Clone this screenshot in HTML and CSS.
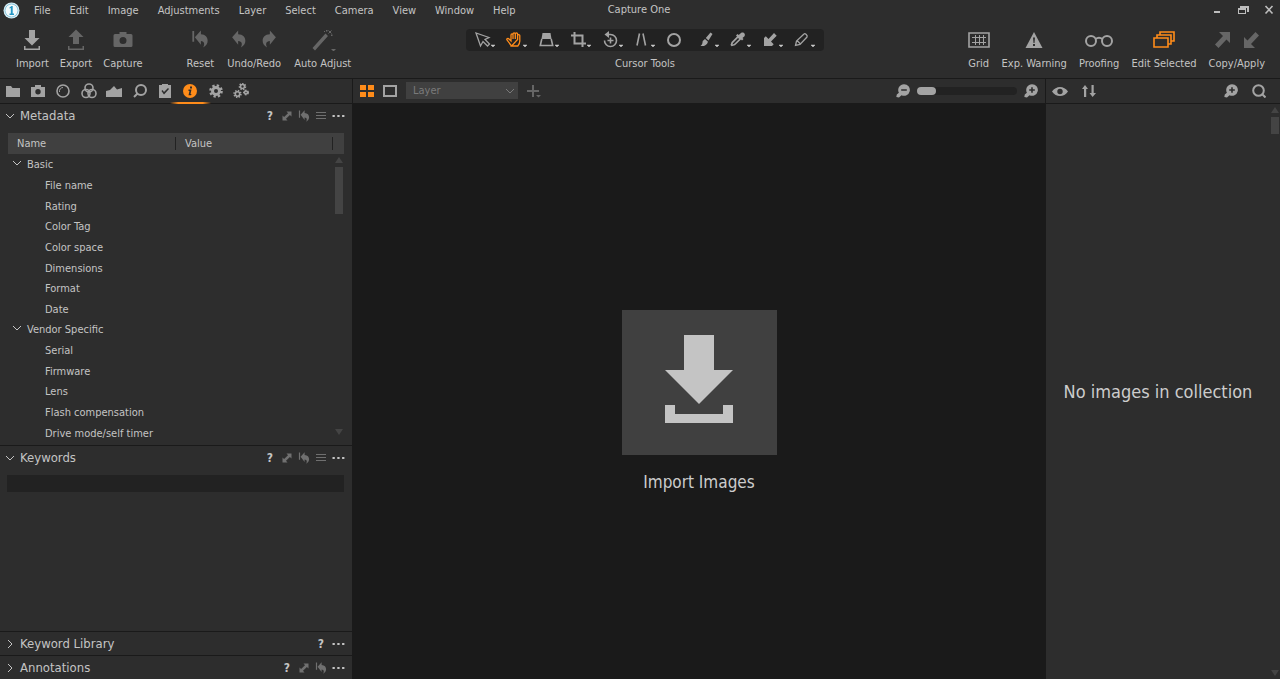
FILE: index.html
```html
<!DOCTYPE html>
<html lang="en">
<head>
<meta charset="utf-8">
<title>Capture One</title>
<link rel="stylesheet" href="styles.css">
</head>
<body>
<svg class="defs" aria-hidden="true">
  <symbol id="i-down" viewBox="0 0 20 22"><path d="M7 1h6v8h4.500L10 16.500 2.500 9H7zM2 17h1.500v2.500h13V17H18v4H2z"/></symbol>
  <symbol id="i-up" viewBox="0 0 20 22"><path d="M7 15V8H2.500L10 0.500 17.500 8H13v7zM2 17h1.500v2.500h13V17H18v4H2z"/></symbol>
  <symbol id="i-camera" viewBox="0 0 20 20"><path fill-rule="evenodd" d="M6.500 2h7v2H18a1.500 1.500 0 0 1 1.500 1.500v10A1.500 1.500 0 0 1 18 17H2A1.500 1.500 0 0 1 .5 15.500v-10A1.500 1.500 0 0 1 2 4h4.500zM10 7a3.500 3.500 0 1 0 0 7 3.500 3.500 0 0 0 0-7z"/></symbol>
  <symbol id="i-undo" viewBox="0 0 18 20"><path d="M7.500.5v4.300c5.500.2 8 3.300 8 7.200 0 3-1.500 5.500-5 7.500 2-3.500 1.500-7-3-7.200v4.200L.8 8z"/></symbol>
  <symbol id="i-reset" viewBox="0 0 20 20"><path d="M1.500 1h2v12h-2zM11 .5v4.300c5 .2 7.500 3.300 7.500 7.200 0 3-1.500 5.500-5 7.500 2-3.500 1.500-7-2.500-7.200v4.200L4.300 8z"/></symbol>
  <symbol id="i-more" viewBox="0 0 13 4"><path d="M.5 1h2.300v2H.5zM5.300 1h2.300v2H5.300zM10.100 1h2.300v2h-2.300z"/></symbol>
  <symbol id="i-list" viewBox="0 0 12 10"><path d="M1 1h10v1H1zM1 4h10v1H1zM1 7h10v1H1z"/></symbol>
  <symbol id="i-expand" viewBox="0 0 12 12"><path d="M5.500 1.500h5v5L8.900 4.900 5 8.800l1.500 1.700h-5v-5l1.600 1.600L7 3.200z"/></symbol>
  <symbol id="i-open" viewBox="0 0 10 10"><path class="line" d="M1 3l4 4 4-4"/></symbol>
  <symbol id="i-closed" viewBox="0 0 10 10"><path class="line" d="M3 1l4 4-4 4"/></symbol>
  <symbol id="i-plus" viewBox="0 0 14 14"><path fill-rule="evenodd" d="M8 .2a5.800 5.800 0 1 1-2.500 11L3 13.500 .3 13 .8 10.500 2.900 8.800A5.800 5.800 0 0 1 8 .2zM7.200 3.200v2H5.200v1.600h2v2h1.600v-2h2V5.200h-2v-2z"/></symbol>
  <symbol id="i-minus" viewBox="0 0 14 14"><path fill-rule="evenodd" d="M8 .2a5.800 5.800 0 1 1-2.500 11L3 13.500 .3 13 .8 10.500 2.900 8.800A5.800 5.800 0 0 1 8 .2zM5.200 5.200v1.600h5.600V5.200z"/></symbol>
</svg>

<header class="top">
  <div class="menubar">
    <nav class="menus" aria-label="Main menu">
      <svg class="logo" viewBox="0 0 17 17"><circle cx="8.500" cy="8.500" r="8" fill="#d9eff7"/><circle cx="8.500" cy="8.500" r="6.500" fill="#f2fafc" stroke="#8ac6dc"/><path d="M6.500 5.500l2-1.500h1.200v7.500H11V13H6.500v-1.500h1.300V6l-1.300.5z" fill="#2396c4"/></svg>
      <button>File</button><button>Edit</button><button>Image</button><button>Adjustments</button><button>Layer</button><button>Select</button><button>Camera</button><button>View</button><button>Window</button><button>Help</button>
    </nav>
    <h1 class="title">Capture One</h1>
    <div class="window-controls">
      <button aria-label="Minimize"><svg viewBox="0 0 12 12"><path d="M3 7h6v2H3z"/></svg></button>
      <button aria-label="Restore"><svg viewBox="0 0 12 12"><path fill-rule="evenodd" d="M3 2h9v6h-2V4H3zM1 4h8v6H1zM2 6v3h6V6z"/></svg></button>
      <button aria-label="Close"><svg viewBox="0 0 12 12"><path class="line thick" d="M2.500 2l7 7.500M9.500 2l-7 7.500"/></svg></button>
    </div>
  </div>

  <div class="toolbar">
    <div class="start">
      <div class="group">
        <button class="tool lit"><svg class="ic20" viewBox="0 0 20 22"><use href="#i-down"/></svg><span>Import</span></button>
        <button class="tool"><svg class="ic20" viewBox="0 0 20 22"><use href="#i-up"/></svg><span>Export</span></button>
        <button class="tool"><svg class="ic20" viewBox="0 0 20 20"><use href="#i-camera"/></svg><span>Capture</span></button>
      </div>
      <div class="group loose">
        <button class="tool"><svg class="ic20" viewBox="0 0 20 22"><use href="#i-reset" x="1" y="1" width="18" height="18"/></svg><span>Reset</span></button>
        <button class="tool"><span class="pair"><svg class="ic20" viewBox="0 0 20 22"><use href="#i-undo" x="2" y="1" width="17" height="18"/></svg><svg class="ic20 flip" viewBox="0 0 20 22"><use href="#i-undo" x="2" y="1" width="17" height="18"/></svg></span><span>Undo/Redo</span></button>
        <button class="tool"><svg class="wand" viewBox="0 0 26 22"><path fill-rule="evenodd" d="M15.500 4.500l2.500 2.500L5 21.500 2.500 19zM14 9.500l-7 8M16 1h1.500v1.500H16zM21 5.500h1.500V7H21zM14 2h1v1h-1z"/><path class="line" d="M18.500 1.500l3 3M21.500 1.500l-3 3"/><path d="M21 20h5l-2.500 2.500z"/></svg><span>Auto Adjust</span></button>
      </div>
    </div>

    <div class="cursor-group">
      <div class="cursor-tools" role="group" aria-labelledby="cursor-label">
        <button aria-label="Select"><svg viewBox="0 0 24 20"><path class="line mid" d="M4 3l4.500 13 2.500-4.500 4.500 4.500 2-2-4.500-4.500 4-2z"/><path class="caret" d="M19 15h4l-2 2z"/></svg></button>
        <button aria-label="Pan" class="on"><svg viewBox="0 0 24 20"><path class="line mid" d="M7.500 16L3 10c-.7-1.300 1-2.300 2-1L7 11V5c0-1.400 2-1.400 2 0v4M9 9V4c0-1.400 2.300-1.400 2.300 0v5M11.300 9V4c0-1.400 2.300-1.400 2.300 0v5.500M13.600 9.500V5.500c0-1.300 2.200-1.300 2.200 0V11c0 2-.7 3.500-2 5H7.500z"/><path class="caret" d="M19 15h4l-2 2z"/></svg></button>
        <button aria-label="Keystone"><svg viewBox="0 0 24 20"><path d="M6.500 3h8l1 6h-10z"/><path class="line thick" d="M5.800 9L4.300 15.500h12.400L15.200 9"/><path class="caret" d="M19 15h4l-2 2z"/></svg></button>
        <button aria-label="Crop"><svg viewBox="0 0 24 20"><path class="line bold" d="M6.500 2v11.500H18M3 5.500h11.500V17"/><path class="caret" d="M19 15h4l-2 2z"/></svg></button>
        <button aria-label="Rotate"><svg viewBox="0 0 24 20"><path class="line thick" d="M8.500 4.500h2a6 6 0 1 1-6 6M10.500 7.500v6M7.500 10.500h6"/><path d="M9 1v7L4.500 4.500z"/><path class="caret" d="M19 15h4l-2 2z"/></svg></button>
        <button aria-label="Straighten"><svg viewBox="0 0 24 20"><path class="line thick" d="M7.500 3.500l-2.500 12M11 3.500l2.500 12"/><path class="caret" d="M19 15h4l-2 2z"/></svg></button>
        <button aria-label="Spot"><svg viewBox="0 0 24 20"><circle class="line bold" cx="10" cy="10" r="6"/></svg></button>
        <button aria-label="Brush"><svg viewBox="0 0 24 20"><path d="M14.500 2.500l2 1.500-4 6.500-2.700-2.500zM9 9l3 2.700c-1 3.600-4 4.800-7.500 4.300 1.700-1 2-3 2.200-5z"/><path class="caret" d="M19 15h4l-2 2z"/></svg></button>
        <button aria-label="Color picker"><svg viewBox="0 0 24 20"><path fill-rule="evenodd" d="M13 3c2-1.500 5 .5 3.500 3.200L14.500 8l1 1-1.500 1.500-1-1L7 15.200l-3.500 1L2.500 15l1-3L9 6.500l-1-1L9.500 4l1.200 1zM10 8l-5 5-.5 1.500 1.500-.5 5.200-5z"/><path class="caret" d="M19 15h4l-2 2z"/></svg></button>
        <button aria-label="Apply"><svg viewBox="0 0 24 20"><path d="M14 3l2.700 2.700-5.700 5.800 2.700 2.700L12 16H4V8l1.800-1.700L8.500 9z"/><path class="caret" d="M19 15h4l-2 2z"/></svg></button>
        <button aria-label="Eraser"><svg viewBox="0 0 24 20"><path class="line mid" d="M12 4c1-1 4 1.500 3 3l-7 7.500-4.500 1 1-4.500zM5 10.500L8.500 14"/><path class="caret" d="M19 15h4l-2 2z"/></svg></button>
      </div>
      <span id="cursor-label">Cursor Tools</span>
    </div>

    <div class="group end">
      <button class="tool lit"><svg class="ic22" viewBox="0 0 22 20"><path class="line thick" d="M1 3h20v14H1z"/><path class="line" d="M4 7.500h14M4 12.500h14M7.500 5v10M11.500 5v10M15.500 5v10"/></svg><span>Grid</span></button>
      <button class="tool lit"><svg class="ic22" viewBox="0 0 22 20"><path fill-rule="evenodd" d="M11 2l8.500 16h-17zM10 7.500h2l-.5 5.500h-1zM10 14h2v2h-2z"/></svg><span>Exp. Warning</span></button>
      <button class="tool lit"><svg class="ic28" viewBox="0 0 28 20"><circle class="line bold" cx="6" cy="11" r="5"/><circle class="line bold" cx="22" cy="11" r="5"/><path class="line bold" d="M10.500 9c2-1.500 5-1.500 7 0"/></svg><span>Proofing</span></button>
      <button class="tool on"><svg class="ic22" viewBox="0 0 22 20"><path class="line thick" d="M1 8h14v9H1zM4 8V5h14v9h-3M7 5V2h14v9h-3"/></svg><span>Edit Selected</span></button>
      <button class="tool"><span class="pair"><svg class="ic20" viewBox="0 0 20 20"><path d="M7 2h11v11l-3.500-3.500-8 8.500L3 14.500 11 6z"/></svg><svg class="ic20" viewBox="0 0 20 20"><path d="M13 18H2V7l3.500 3.500 8-8.500L17 5.500 9 14z"/></svg></span><span>Copy/Apply</span></button>
    </div>
  </div>
</header>

<main class="work">
  <aside class="left">
    <div class="bar tabs" role="tablist">
      <button role="tab" aria-label="Library"><svg viewBox="0 0 16 16"><path d="M1 3h5l1.500 2H15v9H1z"/></svg></button>
      <button role="tab" aria-label="Capture"><svg viewBox="0 0 16 16"><path fill-rule="evenodd" d="M5 2h6v2h4v10H1V4h4zM8 6a2.700 2.700 0 1 0 0 5.400A2.700 2.700 0 0 0 8 6z"/></svg></button>
      <button role="tab" aria-label="Lens"><svg viewBox="0 0 16 16"><circle class="line thick" cx="8" cy="8" r="6"/><path class="line" d="M4.500 9a3.700 3.700 0 0 1 3.500-4.500"/></svg></button>
      <button role="tab" aria-label="Color"><svg viewBox="0 0 16 16"><circle class="line thick" cx="8" cy="5" r="4"/><circle class="line thick" cx="5" cy="10.500" r="4"/><circle class="line thick" cx="11" cy="10.500" r="4"/></svg></button>
      <button role="tab" aria-label="Exposure"><svg viewBox="0 0 16 16"><path d="M0 14V8l4-1 4-4 3 3.500L16 5v9z"/></svg></button>
      <button role="tab" aria-label="Details"><svg viewBox="0 0 16 16"><circle class="line bold" cx="9" cy="7" r="5"/><path class="line bold" d="M5.500 10.500L2 14"/></svg></button>
      <button role="tab" aria-label="Adjustments"><svg viewBox="0 0 16 16"><path fill-rule="evenodd" d="M2 2h3V1h6v1h3v13H2zM4.500 8L7 11.500l5-5.500-1-1-4 4L5.500 7z"/></svg></button>
      <button role="tab" aria-label="Metadata" aria-selected="true" class="on"><svg viewBox="0 0 16 16"><path fill-rule="evenodd" d="M8 1a7 7 0 1 1 0 14A7 7 0 0 1 8 1zM8 3.500h2v2H8zM6.500 6.500h3L8.500 11h1l-.5 1.200H6.500L7.500 8h-1z"/></svg></button>
      <button role="tab" aria-label="Output"><svg viewBox="0 0 16 16"><circle class="line gear" cx="8" cy="8" r="5.300"/><circle class="line wide" cx="8" cy="8" r="3.500"/></svg></button>
      <button role="tab" aria-label="Batch"><svg viewBox="0 0 16 16"><circle class="line cog" cx="9.500" cy="3.500" r="2.800"/><circle class="line thick" cx="9.500" cy="3.500" r="2"/><circle class="line cog" cx="4.500" cy="11" r="3.200"/><circle class="line thick" cx="4.500" cy="11" r="2.200"/><circle class="line cog" cx="13" cy="9.500" r="2"/><circle class="line thick" cx="13" cy="9.500" r="1.500"/></svg></button>
    </div>

    <section class="panel">
      <div class="panel-head">
        <button class="fold"><svg viewBox="0 0 10 10"><use href="#i-open"/></svg><span>Metadata</span></button>
        <div class="panel-actions"><button aria-label="Help" class="help">?</button><button aria-label="Copy"><svg viewBox="0 0 12 12"><use href="#i-expand"/></svg></button><button aria-label="Reset"><svg viewBox="0 0 12 12"><use href="#i-reset" /></svg></button><button aria-label="Presets"><svg viewBox="0 0 12 10"><use href="#i-list"/></svg></button><button aria-label="More" class="more"><svg viewBox="0 0 13 4"><use href="#i-more"/></svg></button></div>
      </div>
      <div class="meta">
        <table>
          <thead><tr><th class="name">Name</th><th class="value">Value</th></tr></thead>
          <tbody>
            <tr class="cat"><td colspan="2"><svg viewBox="0 0 10 10"><use href="#i-open"/></svg>Basic</td></tr>
            <tr><td>File name</td><td></td></tr>
            <tr><td>Rating</td><td></td></tr>
            <tr><td>Color Tag</td><td></td></tr>
            <tr><td>Color space</td><td></td></tr>
            <tr><td>Dimensions</td><td></td></tr>
            <tr><td>Format</td><td></td></tr>
            <tr><td>Date</td><td></td></tr>
            <tr class="cat"><td colspan="2"><svg viewBox="0 0 10 10"><use href="#i-open"/></svg>Vendor Specific</td></tr>
            <tr><td>Serial</td><td></td></tr>
            <tr><td>Firmware</td><td></td></tr>
            <tr><td>Lens</td><td></td></tr>
            <tr><td>Flash compensation</td><td></td></tr>
            <tr><td>Drive mode/self timer</td><td></td></tr>
          </tbody>
        </table>
        <div class="scroll"><i class="up"></i><i class="thumb"></i><i class="down"></i></div>
      </div>
    </section>

    <section class="panel grow">
      <div class="panel-head">
        <button class="fold"><svg viewBox="0 0 10 10"><use href="#i-open"/></svg><span>Keywords</span></button>
        <div class="panel-actions"><button aria-label="Help" class="help">?</button><button aria-label="Copy"><svg viewBox="0 0 12 12"><use href="#i-expand"/></svg></button><button aria-label="Reset"><svg viewBox="0 0 12 12"><use href="#i-reset"/></svg></button><button aria-label="Presets"><svg viewBox="0 0 12 10"><use href="#i-list"/></svg></button><button aria-label="More" class="more"><svg viewBox="0 0 13 4"><use href="#i-more"/></svg></button></div>
      </div>
      <input class="keywords" type="text" aria-label="Keywords">
    </section>

    <section class="panel">
      <div class="panel-head">
        <button class="fold"><svg viewBox="0 0 10 10"><use href="#i-closed"/></svg><span>Keyword Library</span></button>
        <div class="panel-actions"><button aria-label="Help" class="help">?</button><button aria-label="More" class="more"><svg viewBox="0 0 13 4"><use href="#i-more"/></svg></button></div>
      </div>
    </section>
    <section class="panel">
      <div class="panel-head">
        <button class="fold"><svg viewBox="0 0 10 10"><use href="#i-closed"/></svg><span>Annotations</span></button>
        <div class="panel-actions"><button aria-label="Help" class="help">?</button><button aria-label="Copy"><svg viewBox="0 0 12 12"><use href="#i-expand"/></svg></button><button aria-label="Reset"><svg viewBox="0 0 12 12"><use href="#i-reset"/></svg></button><button aria-label="More" class="more"><svg viewBox="0 0 13 4"><use href="#i-more"/></svg></button></div>
      </div>
    </section>
  </aside>

  <section class="viewer">
    <div class="bar viewer-bar">
      <button aria-label="Grid view" class="on"><svg viewBox="0 0 14 14"><path d="M0 1h6v5H0zM8 1h6v5H8zM0 8h6v5H0zM8 8h6v5H8z"/></svg></button>
      <button aria-label="Single view"><svg viewBox="0 0 14 14"><path class="line bold" d="M1 2h12v10H1z"/></svg></button>
      <div class="layer"><select aria-label="Layer"><option>Layer</option></select><svg viewBox="0 0 10 10"><use href="#i-open"/></svg></div>
      <button aria-label="Add layer" class="dim"><svg viewBox="0 0 14 14"><path d="M5 1h2v5h5v2H7v5H5V8H0V6h5zM9 11h5l-2.500 2.500z"/></svg></button>
      <div class="zoom">
        <button aria-label="Zoom out"><svg viewBox="0 0 14 14"><use href="#i-minus"/></svg></button>
        <input type="range" min="0" max="100" value="0" aria-label="Thumbnail size">
        <button aria-label="Zoom in"><svg viewBox="0 0 14 14"><use href="#i-plus"/></svg></button>
      </div>
    </div>
    <div class="stage">
      <button class="import">
        <span class="import-box"><svg viewBox="0 0 68 88"><path d="M19 0h30v35h19L34 69 0 35h19zM0 70h10v9h48v-9h10v18H0z"/></svg></span>
        <span>Import Images</span>
      </button>
    </div>
  </section>

  <aside class="browser">
    <div class="bar browser-bar">
      <button aria-label="Visibility"><svg class="ic16" viewBox="0 0 16 14"><path fill-rule="evenodd" d="M0 7.500c4-6 12-6 16 0-4 6-12 6-16 0zM8 4.800a2.700 2.700 0 1 0 0 5.400 2.700 2.700 0 0 0 0-5.400z"/></svg></button>
      <button aria-label="Sort"><svg viewBox="0 0 14 14"><path d="M3 1l3 4H4.200v8H2V5H0zM9.500 1h2.200v8H14l-3.400 4L7.500 9h2z"/></svg></button>
      <button aria-label="Zoom in" class="push"><svg viewBox="0 0 14 14"><use href="#i-plus"/></svg></button>
      <button aria-label="Search"><svg viewBox="0 0 14 14"><circle class="line bold" cx="6.500" cy="6.500" r="5.300"/><path class="line bold" d="M10 10l3.500 3.500"/></svg></button>
    </div>
    <div class="browser-body">
      <p>No images in collection</p>
      <div class="scroll"><i class="up"></i><i class="thumb short"></i><i class="down"></i></div>
    </div>
  </aside>
</main>
</body>
</html>
```
FILE: styles.css
```css
:root {
  --bg: #2d2d2d;
  --edge: #1a1a1a;
  --raised: #404040;
  --well: #222222;
  --text: #c4c4c4;
  --icon: #a3a3a3;
  --dim: #666666;
  --accent: #ff8c1a;
}

* { box-sizing: border-box; }

body {
  margin: 0;
  height: 100vh;
  display: flex;
  flex-direction: column;
  background: var(--bg);
  color: var(--text);
  font: 11px/16px "DejaVu Sans Condensed", "Noto Sans", sans-serif;
  overflow: hidden;
}

button, input, select { font: inherit; color: inherit; }
button { padding: 0; border: 0; background: none; white-space: nowrap; }
svg { display: block; fill: currentColor; flex: none; }
.defs { position: absolute; width: 0; height: 0; }
.line { fill: none; stroke: currentColor; stroke-width: 1; }
.mid { stroke-width: 1.300; }
.thick { stroke-width: 1.600; }
.bold { stroke-width: 2; }
.wide { stroke-width: 3; }
.gear { stroke-width: 3; stroke-dasharray: 2.200 1.963; }
.cog { stroke-width: 2; stroke-dasharray: 1.300 1.200; }

/* Title and menu row */
.menubar {
  display: grid;
  grid-template-columns: 1fr auto 1fr;
  align-items: center;
  height: 20px;
  padding: 0 5px 0 3px;
}
.menus { display: flex; align-items: center; gap: 19px; }
.menus button { padding-top: 1px; }
.logo { width: 17px; height: 17px; margin-right: -5px; }
.title { margin: 0; font-size: 11px; font-weight: 400; }
.window-controls { display: flex; justify-content: flex-end; gap: 14px; color: #bdbdbd; }
.window-controls svg { width: 12px; height: 12px; }

/* Main toolbar */
.toolbar {
  display: grid;
  grid-template-columns: 1fr auto 1fr;
  height: 59px;
  padding: 9px 5px 0 15px;
  border-bottom: 1px solid var(--edge);
}
.start { display: flex; gap: 44px; padding-left: 1px; }
.group { display: flex; align-items: flex-start; gap: 11px; }
.loose { gap: 13px; }
.end { justify-content: flex-end; gap: 12px; margin-right: 10px; }
.tool { display: flex; flex-direction: column; align-items: center; gap: 5px; }
.tool svg { color: var(--dim); height: 22px; }
.tool.lit svg { color: var(--icon); }
.tool.on svg { color: var(--accent); }
.pair { display: flex; gap: 10px; }
.flip { transform: scaleX(-1); }
.ic20 { width: 20px; }
.ic22 { width: 22px; }
.ic28 { width: 28px; }
.wand { width: 26px; }
.cursor-group { display: flex; flex-direction: column; align-items: center; gap: 5px; }
.cursor-tools {
  display: grid;
  grid-template-columns: repeat(11, 32px);
  padding: 0 2px 0 4px;
  height: 22px;
  border-radius: 4px;
  background: var(--well);
  color: var(--icon);
}
.cursor-tools button { display: flex; align-items: center; padding-left: 2px; }
.cursor-tools svg { width: 24px; height: 20px; }
.cursor-tools .on { color: var(--accent); }
.caret { fill: #c8c8c8; stroke: #c8c8c8; stroke-width: 0.500; }

/* Work area */
.work {
  flex: 1;
  min-height: 0;
  display: grid;
  grid-template-columns: 352px 1fr 234px;
  gap: 1px;
  background: var(--edge);
}
.left, .viewer, .browser { display: flex; flex-direction: column; min-width: 0; min-height: 0; }
.left, .browser { background: var(--bg); }
.bar {
  display: flex;
  align-items: center;
  height: 25px;
  padding-bottom: 1px;
  border-bottom: 1px solid var(--edge);
  background: var(--bg);
  color: var(--icon);
  flex: none;
}
.bar .on { color: var(--accent); }
.bar svg { width: 14px; height: 14px; }

.tabs { display: grid; grid-template-columns: repeat(10, 1fr); padding-right: 98px; }
.tabs button { display: flex; justify-content: center; align-items: center; height: 24px; }
.tabs svg { width: 16px; height: 16px; }
.tabs .on { position: relative; }
.tabs .on::after {
  content: "";
  position: absolute;
  bottom: -1px;
  left: -8px;
  right: -8px;
  height: 2px;
  background: linear-gradient(90deg, transparent, var(--accent) 20%, var(--accent) 80%, transparent);
}

/* Tool panels */
.panel + .panel { border-top: 1px solid var(--edge); }
.grow { flex: 1; }
.panel-head {
  display: flex;
  justify-content: space-between;
  align-items: center;
  height: 23px;
  padding: 0 7px 0 5px;
}
.fold { display: flex; align-items: center; gap: 5px; font-size: 13px; }
.fold svg, .cat svg { width: 10px; height: 10px; }
.panel-actions { display: flex; align-items: center; gap: 5px; color: #707070; }
.panel-actions svg { width: 12px; height: 12px; }
.panel-actions .more svg { width: 13px; }
.help { width: 12px; font-weight: 700; font-size: 12px; color: var(--text); }
.panel-actions .more { color: var(--text); }

.meta { position: relative; margin: 6px 8px 2px; }
table { width: 100%; height: 310px; border-collapse: collapse; table-layout: fixed; }
th, td { padding: 1px 0 0; text-align: left; font-weight: 400; line-height: 16px; }
thead tr { height: 21px; background: var(--raised); }
.name { width: 50%; padding-left: 9px; }
.value { padding-left: 9px; }
thead th { background: linear-gradient(var(--well), var(--well)) right 0 center / 1px 13px no-repeat; }
thead .value { background-position: right 11px center; }
td { padding: 2px 0 0 37px; }
.cat td { padding-left: 4px; }
.cat svg { display: inline-block; margin-right: 5px; }

.scroll { position: absolute; top: 24px; right: 1px; bottom: 8px; width: 8px; }
.scroll i { display: block; }
.up { border: 4px solid transparent; border-top: 0; border-bottom: 6px solid #444; }
.thumb { height: 47px; margin-top: 4px; background: #444; }
.short { height: 17px; }
.down { position: absolute; bottom: 0; border: 4px solid transparent; border-bottom: 0; border-top: 6px solid #444; }

.keywords {
  display: block;
  width: calc(100% - 15px);
  height: 17px;
  margin: 6px 7px;
  padding: 0 4px;
  border: 0;
  background: var(--well);
}

/* Viewer */
.viewer { background: var(--edge); }
.viewer-bar { gap: 9px; padding-left: 7px; padding-right: 7px; }
.layer { position: relative; width: 112px; height: 17px; color: #7a7a7a; }
.layer select {
  display: block;
  width: 100%;
  height: 17px;
  padding: 0 7px;
  border: 0;
  appearance: none;
  background: var(--raised);
}
.layer svg { position: absolute; right: 3px; top: 4px; width: 10px; height: 10px; pointer-events: none; }
.dim { color: var(--dim); }
.zoom { display: flex; align-items: center; gap: 7px; margin-left: auto; }
.zoom input { appearance: none; width: 100px; height: 8px; margin: 0; border-radius: 4px; background: var(--well); }
.zoom input::-webkit-slider-thumb { appearance: none; width: 19px; height: 8px; border-radius: 4px; background: var(--icon); }

.stage { flex: 1; display: flex; justify-content: center; align-items: center; padding-top: 20px; }
.import { display: flex; flex-direction: column; align-items: center; gap: 16px; font-size: 17px; line-height: 22px; color: #cccccc; }
.import-box {
  display: flex;
  justify-content: center;
  align-items: center;
  width: 155px;
  height: 145px;
  padding-bottom: 7px;
  background: var(--raised);
  color: #c4c4c4;
}
.import-box svg { width: 68px; height: 88px; }

/* Browser */
.browser-bar { gap: 14px; padding-left: 6px; padding-right: 14px; }
.browser-bar .ic16 { width: 16px; }
.push { margin-left: auto; }
.browser-body { position: relative; flex: 1; display: flex; align-items: center; justify-content: center; padding-right: 10px; }
.browser-body p { margin: 0; font-size: 18px; line-height: 24px; color: #cccccc; }
.browser-body .scroll { top: 3px; right: 1px; bottom: 3px; }
```
